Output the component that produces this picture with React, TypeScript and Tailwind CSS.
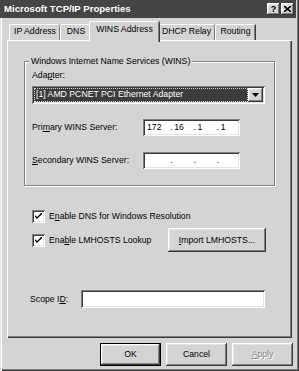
import { ReactNode } from 'react'

const raised =
  'shadow-[inset_-1px_-1px_0_#3a3a3a,inset_1px_1px_0_#ffffff,inset_-2px_-2px_0_#808080,inset_2px_2px_0_#e4e4e4]'
const sunken =
  'shadow-[inset_1px_1px_0_#808080,inset_-1px_-1px_0_#ffffff,inset_2px_2px_0_#3a3a3a,inset_-2px_-2px_0_#e4e4e4]'

function U({ children }: { children: ReactNode }) {
  return <span className="underline underline-offset-[1px]">{children}</span>
}

function Tab({ label, width, active }: { label: string; width: number; active?: boolean }) {
  if (active) {
    return (
      <div
        style={{ width }}
        className="relative z-10 -mx-[2px] -mb-[2px] flex h-[21px] items-start justify-center rounded-t-[2px] border-l border-t border-white bg-[#d4d4d4] pt-[3px] shadow-[inset_-1px_0_0_#808080,1px_0_0_#3a3a3a]"
      >
        {label}
      </div>
    )
  }
  return (
    <div
      style={{ width }}
      className="flex h-[16px] items-start justify-center rounded-t-[2px] border-l border-t border-white pt-[2px] shadow-[inset_-1px_0_0_#808080,1px_0_0_#3a3a3a]"
    >
      {label}
    </div>
  )
}

function Button({ children, width, height = 23, isDefault, disabled }: {
  children: ReactNode
  width: number
  height?: number
  isDefault?: boolean
  disabled?: boolean
}) {
  return (
    <div
      style={{ width, height }}
      className={`flex items-center justify-center ${isDefault ? 'border border-black' : ''}`}
    >
      <div
        className={`flex h-full w-full items-center justify-center ${raised} ${
          disabled ? 'text-[#8a8a8a] [text-shadow:1px_1px_0_#ffffff]' : ''
        }`}
      >
        {children}
      </div>
    </div>
  )
}

function Check({ children }: { children: ReactNode }) {
  return (
    <div className="flex items-center gap-[4px]">
      <div className={`flex h-[13px] w-[13px] items-center justify-center bg-white ${sunken}`}>
        <svg width="7" height="7" viewBox="0 0 7 7">
          <path d="M0 2 L0 4 L2 6 L7 1 L7 -1 L2 4 Z" fill="#000" />
        </svg>
      </div>
      <span>{children}</span>
    </div>
  )
}

function IpField({ parts, width }: { parts: string[]; width: number }) {
  return (
    <div style={{ width }} className={`flex h-[17px] items-center bg-white pl-[4px] ${sunken}`}>
      {parts.map((p, i) => (
        <span key={i} className="flex w-[24px]">
          {i > 0 && <span className="w-[4px]">.</span>}
          <span>{p}</span>
        </span>
      ))}
    </div>
  )
}

export default function App() {
  return (
    <div
      className="relative h-[371px] w-[299px] overflow-hidden bg-[#d4d4d4] text-[8.7px] leading-none text-black shadow-[inset_1px_0_0_#e4e4e4,inset_2px_0_0_#ffffff,inset_-1px_-1px_0_#3a3a3a,inset_-2px_-2px_0_#808080]"
      style={{ fontFamily: '"Liberation Sans", Arial, sans-serif' }}
    >
      {/* title bar */}
      <div className="mr-[3px] flex h-[18px] items-center justify-between bg-[#454545] pl-[4px] pr-[2px] text-[9.6px] font-bold text-white">
        <span>Microsoft TCP/IP Properties</span>
        <div className="flex gap-[1px] text-black">
          <div className={`flex h-[12px] w-[13px] items-center justify-center bg-[#d4d4d4] text-[9px] ${raised}`}>?</div>
          <div className={`flex h-[12px] w-[13px] items-center justify-center bg-[#d4d4d4] ${raised}`}>
            <svg width="7" height="6" viewBox="0 0 7 6">
              <path d="M0 0 L7 6 M7 0 L0 6" stroke="#000" strokeWidth="1.6" />
            </svg>
          </div>
        </div>
      </div>

      {/* tabs */}
      <div className="mt-[6px] flex h-[16px] items-end pl-[9px]">
        <Tab label="IP Address" width={51} />
        <Tab label="DNS" width={31} />
        <Tab label="WINS Address" width={70} active />
        <Tab label="DHCP Relay" width={58} />
        <Tab label="Routing" width={40} />
      </div>

      {/* panel */}
      <div className="ml-[7px] flex h-[298px] w-[285px] flex-col border-l border-t border-white shadow-[inset_-1px_-1px_0_#3a3a3a,inset_-2px_-2px_0_#808080]">
        {/* group box */}
        <div className="relative ml-[16px] mt-[20px] h-[125px] w-[251px] border border-[#808080] shadow-[1px_1px_0_#ffffff,inset_1px_1px_0_#ffffff]">
          <span className="absolute -top-[5px] left-[4px] bg-[#d4d4d4] px-[2px]">
            Windows Internet Name Services (WINS)
          </span>
          <div className="flex flex-col pl-[7px] pt-[9px]">
            <span>
              Ada<U>p</U>ter:
            </span>
            <div className={`mt-[6px] flex h-[18px] w-[233px] items-center bg-white p-[2px] ${sunken}`}>
              <div className="flex h-full flex-1 items-center border border-dotted border-[#d4d4d4] bg-[#3c3c3c] pl-[1px] text-white">
                [1] AMD PCNET PCI Ethernet Adapter
              </div>
              <div className={`flex h-[14px] w-[15px] items-center justify-center bg-[#d4d4d4] ${raised}`}>
                <svg width="7" height="4" viewBox="0 0 7 4">
                  <path d="M0 0 H7 L3.5 4 Z" fill="#000" />
                </svg>
              </div>
            </div>
            <div className="mt-[15px] flex items-center">
              <span className="w-[111px]">
                Pri<U>m</U>ary WINS Server:
              </span>
              <IpField parts={['172', '16', '1', '1']} width={97} />
            </div>
            <div className="mt-[16px] flex items-center">
              <span className="w-[111px]">
                <U>S</U>econdary WINS Server:
              </span>
              <IpField parts={['', '', '', '']} width={97} />
            </div>
          </div>
        </div>

        {/* checkboxes */}
        <div className="ml-[24px] mt-[24px]">
          <Check>
            E<U>n</U>able DNS for Windows Resolution
          </Check>
        </div>
        <div className="ml-[24px] mt-[5px] flex items-center">
          <div className="w-[136px]">
            <Check>
              Ena<U>b</U>le LMHOSTS Lookup
            </Check>
          </div>
          <Button width={98} height={24}>
            <U>I</U>mport LMHOSTS...
          </Button>
        </div>

        {/* scope id */}
        <div className="ml-[22px] mt-[38px] flex items-center">
          <span className="w-[51px]">
            Scope I<U>D</U>:
          </span>
          <div className={`h-[18px] w-[184px] bg-white ${sunken}`} />
        </div>
      </div>

      {/* buttons */}
      <div className="mt-[5px] flex gap-[5px] pl-[100px]">
        <Button width={61} isDefault>
          OK
        </Button>
        <Button width={61}>Cancel</Button>
        <Button width={61} disabled>
          <U>A</U>pply
        </Button>
      </div>
    </div>
  )
}
